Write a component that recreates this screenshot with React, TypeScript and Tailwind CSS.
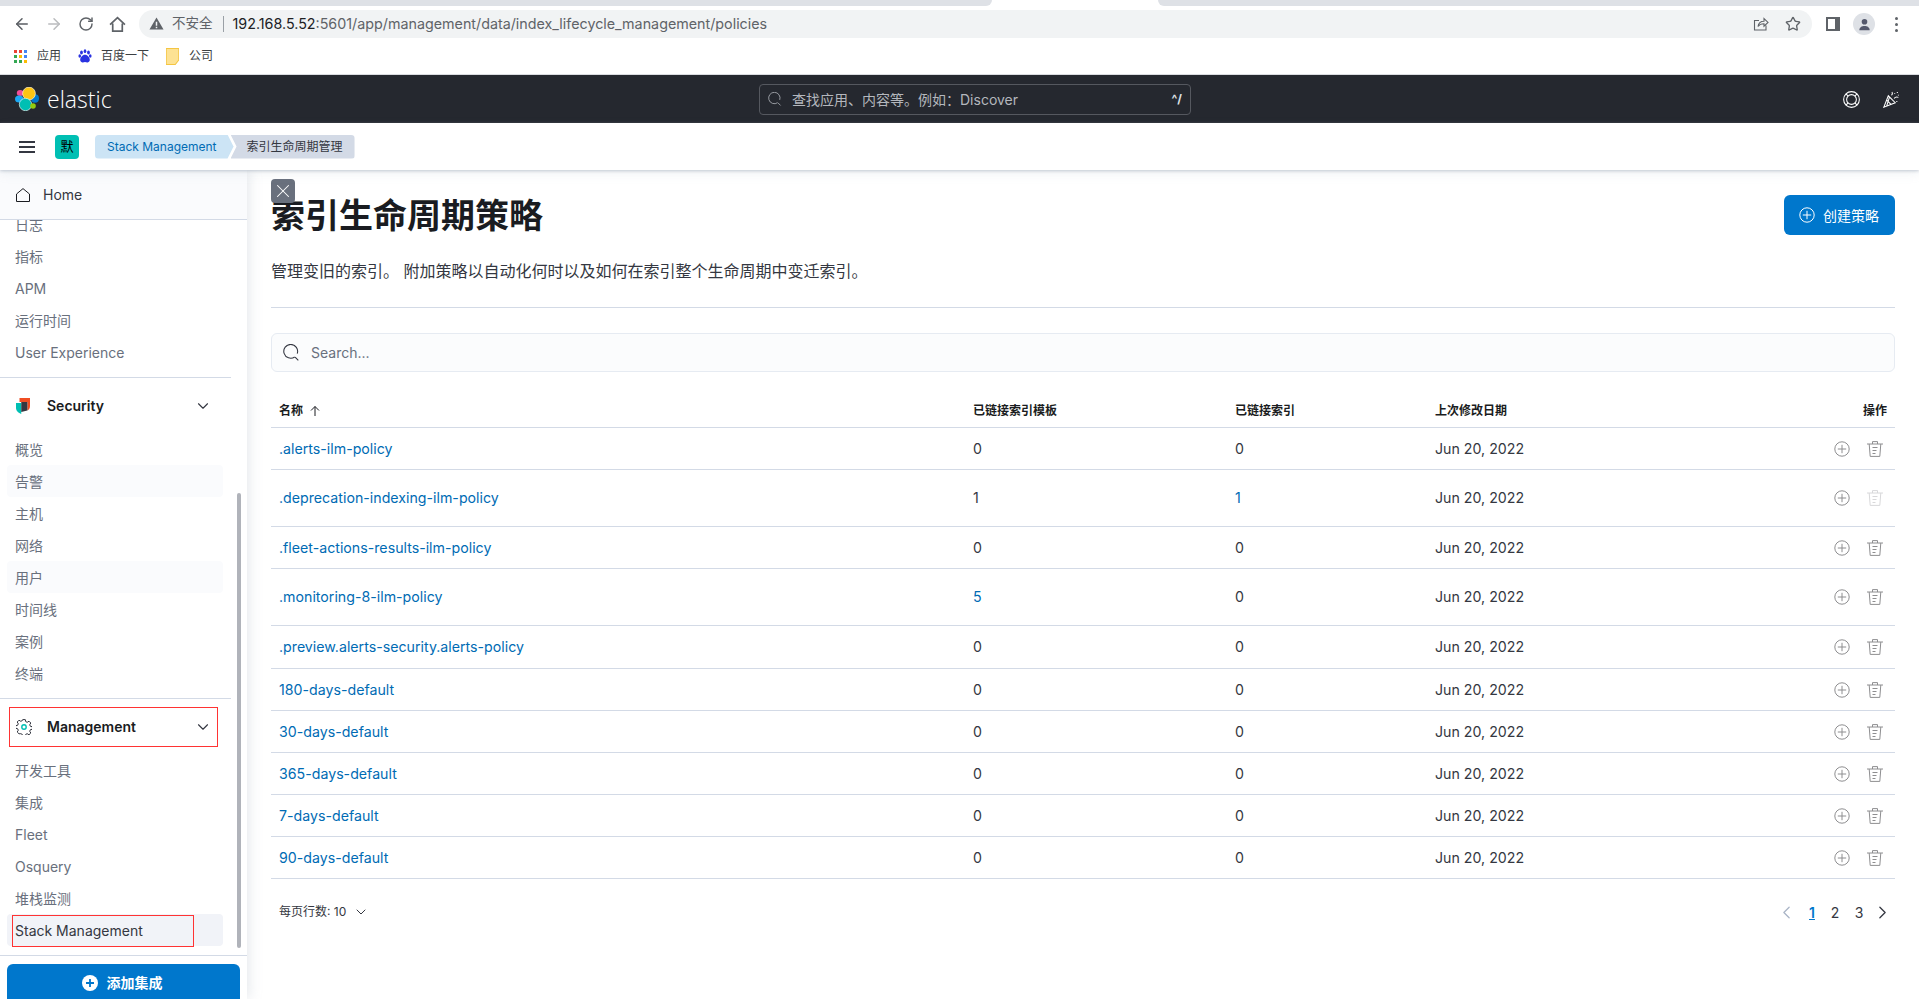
import { ArrowLeft, ArrowRight, ChevronDown, ChevronLeft, ChevronRight, RotateCw, Star, X } from "lucide-react";

const rows = [
  { name: ".alerts-ilm-policy", templates: "0", indices: "0", h: "h-[42px]" },
  { name: ".deprecation-indexing-ilm-policy", templates: "1", indices: "1", h: "h-[57px]", indicesLink: true, noDelete: true },
  { name: ".fleet-actions-results-ilm-policy", templates: "0", indices: "0", h: "h-[42px]" },
  { name: ".monitoring-8-ilm-policy", templates: "5", indices: "0", h: "h-[57px]", templatesLink: true },
  { name: ".preview.alerts-security.alerts-policy", templates: "0", indices: "0", h: "h-[43px]" },
  { name: "180-days-default", templates: "0", indices: "0", h: "h-[42px]" },
  { name: "30-days-default", templates: "0", indices: "0", h: "h-[42px]" },
  { name: "365-days-default", templates: "0", indices: "0", h: "h-[42px]" },
  { name: "7-days-default", templates: "0", indices: "0", h: "h-[42px]" },
  { name: "90-days-default", templates: "0", indices: "0", h: "h-[42px]" },
];

function PlusCircle({ className }: { className?: string }) {
  return (
    <svg viewBox="0 0 16 16" className={className} fill="none" stroke="currentColor" strokeWidth="1">
      <circle cx="8" cy="8" r="7.2" />
      <path d="M8 3.8v8.4M3.8 8h8.4" />
    </svg>
  );
}

function Trash({ className }: { className?: string }) {
  return (
    <svg viewBox="0 0 16 16" className={className} fill="none" stroke="currentColor" strokeWidth="1">
      <path d="M0 3h16M5.5 3V.6h5V3M2.2 3l1 12.4h9.6l1-12.4M5.5 6.500h5M5.500 9.500h4M5.500 12.500h3" />
    </svg>
  );
}

function Search({ className }: { className?: string }) {
  return (
    <svg viewBox="0 0 16 16" className={className} fill="none" stroke="currentColor" strokeWidth="1">
      <path d="M11 12.2A6.5 6.5 0 1 1 13.4 9M11.4 12.4l3 3" />
    </svg>
  );
}

function ElasticLogo() {
  return (
    <svg viewBox="0 0 24 24" className="h-6 w-6 shrink-0">
      <ellipse cx="5.2" cy="6" rx="3.4" ry="3" fill="#f04e98" />
      <ellipse cx="4.2" cy="12" rx="4.2" ry="3.6" fill="#1ba9f5" />
      <ellipse cx="20" cy="11.5" rx="4" ry="4.2" fill="#0077cc" />
      <circle cx="14" cy="6.5" r="6.4" fill="#fec514" stroke="#fff" strokeWidth="0.6" />
      <circle cx="10.5" cy="17.5" r="6.2" fill="#00bfb3" stroke="#fff" strokeWidth="0.6" />
      <circle cx="18" cy="19" r="2.8" fill="#93c90e" />
    </svg>
  );
}

function ChromeBar() {
  return (
    <div className="shrink-0 bg-white text-[#5f6368]">
      <div className="flex h-[6px]">
        <div className="w-[992px] rounded-br-md bg-[#dee1e6]" />
        <div className="w-[166px]" />
        <div className="flex-1 rounded-bl-md bg-[#dee1e6]" />
      </div>
      <div className="flex h-[32px] items-start pt-[4px]">
        <div className="flex w-[139px] shrink-0 items-center pl-[13px] pt-[5px]">
          <ArrowLeft size={18} strokeWidth={2} className="text-[#5a5e63]" />
          <ArrowRight size={18} strokeWidth={2} className="ml-[14px] text-[#babcbe]" />
          <RotateCw size={16} strokeWidth={2.2} className="ml-[15px]" />
          <svg viewBox="0 0 16 16" className="ml-[15px] h-[17px] w-[17px]" fill="none" stroke="currentColor" strokeWidth="1.6">
            <path d="M1 8.2 8 1.5l7 6.7M3.5 7v7.2h9V7" />
          </svg>
        </div>
        <div className="flex h-[28px] w-[1673px] items-center rounded-full bg-[#f1f3f4] pb-px pl-[10px] text-[14.3px]">
          <svg viewBox="0 0 16 16" className="h-[15px] w-[15px] fill-[#5f6368]">
            <path d="M8 1.5 15.5 14.5H.5ZM7.2 6v4.5h1.6V6Zm0 5.4V13h1.6v-1.6Z" fillRule="evenodd" />
          </svg>
          <span className="ml-[8px] text-[13.5px]">不安全</span>
          <span className="ml-[10px] mr-[9px] h-[16px] w-px bg-[#9aa0a6]" />
          <span className="text-[#202124]">192.168.5.52</span>
          <span>:5601/app/management/data/index_lifecycle_management/policies</span>
          <svg viewBox="0 0 16 16" className="ml-auto h-[16px] w-[16px]" fill="none" stroke="currentColor" strokeWidth="1.1">
            <path d="M13 9.5V14H1.5V4.5H6M5 10.5c.5-3.6 3-5.2 6-5.2V2.6L15 6.4l-4 3.8V7.8c-2.500 0-4.700.8-6 2.700Z" />
          </svg>
          <Star size={16} strokeWidth={2} className="ml-[16px] mr-[11px]" />
        </div>
        <div className="ml-[14px] h-[14px] w-[14px] self-center border-[2px] border-r-[5px] border-[#5f6368] bg-white" />
        <div className="ml-[13px] flex h-[22px] w-[22px] items-center justify-center self-center rounded-full bg-[#dee1e6]">
          <svg viewBox="0 0 16 16" className="h-[15px] w-[15px] fill-[#54586c]">
            <circle cx="8" cy="5" r="3" />
            <path d="M2.500 14c0-3 2.500-4.500 5.500-4.500s5.500 1.500 5.500 4.500Z" />
          </svg>
        </div>
        <div className="ml-[20px] flex flex-col gap-[3px] self-center">
          <span className="h-[3px] w-[3px] rounded-full bg-[#5f6368]" />
          <span className="h-[3px] w-[3px] rounded-full bg-[#5f6368]" />
          <span className="h-[3px] w-[3px] rounded-full bg-[#5f6368]" />
        </div>
      </div>
      <div className="flex h-[36px] items-center pl-[14px] text-[12px] text-[#3c4043]">
        <div className="grid h-[13px] w-[13px] grid-cols-3 gap-[2px]">
          <span className="bg-[#ea4335]" />
          <span className="bg-[#ea4335]" />
          <span className="bg-[#4285f4]" />
          <span className="bg-[#34a853]" />
          <span className="bg-[#fbbc04]" />
          <span className="bg-[#4285f4]" />
          <span className="bg-[#34a853]" />
          <span className="bg-[#34a853]" />
          <span className="bg-[#fbbc04]" />
        </div>
        <span className="ml-[10px]">应用</span>
        <svg viewBox="0 0 16 16" className="ml-[17px] h-[14px] w-[14px] fill-[#2932e1]">
          <ellipse cx="4" cy="4" rx="1.600" ry="2.200" />
          <ellipse cx="8" cy="2.500" rx="1.500" ry="2.200" />
          <ellipse cx="12" cy="4" rx="1.600" ry="2.200" />
          <ellipse cx="2" cy="8" rx="1.500" ry="2" />
          <ellipse cx="14" cy="8" rx="1.500" ry="2" />
          <path d="M8 6.500c-3 0-5.500 3-5.500 6 0 2 2 3 3 2.800 1-.2 1.500-.5 2.500-.5s1.500.3 2.500.5c1 .2 3-.8 3-2.800 0-3-2.500-6-5.500-6Z" />
        </svg>
        <span className="ml-[9px]">百度一下</span>
        <svg viewBox="0 0 16 16" className="ml-[17px] h-[17px] w-[13px]" preserveAspectRatio="none">
          <path d="M.5.5h15v11l-4 4H.5Z" fill="#fde293" stroke="#f4c542" />
        </svg>
        <span className="ml-[10px]">公司</span>
      </div>
      <div className="h-px bg-[#dadce0]" />
    </div>
  );
}

function TopNav() {
  return (
    <>
      <div className="flex h-[48px] shrink-0 items-center bg-[#25282f] pl-[15px] pr-[19px]">
        <div className="flex w-[744px] shrink-0 items-center">
          <ElasticLogo />
          <span className="ml-[8px] font-['Open_Sans',sans-serif] text-[23px] font-light leading-none text-white">elastic</span>
        </div>
        <div className="flex h-[31px] w-[432px] items-center rounded-[4px] border border-[#55585f] pl-[8px] pr-[8px] text-[14px] text-[#b4b7bd]">
          <Search className="h-[14px] w-[14px] text-[#a6a9af]" />
          <span className="ml-[10px]">查找应用、内容等。例如：Discover</span>
          <span className="ml-auto text-[12px] font-bold leading-none text-[#dfe1e5]">^/</span>
        </div>
        <svg viewBox="0 0 16 16" className="ml-auto h-[17px] w-[17px] text-white" fill="none" stroke="currentColor" strokeWidth="1">
          <circle cx="8" cy="8" r="7.400" />
          <circle cx="8" cy="8" r="4.600" />
          <path d="M2.800 2.800l2 2M13.200 2.800l-2 2M2.800 13.200l2-2M13.200 13.200l-2-2" />
        </svg>
        <svg viewBox="0 0 16 16" className="ml-[23px] h-[17px] w-[17px] text-white" fill="none" stroke="currentColor" strokeWidth="1">
          <path d="M.8 15.200 5 4.500l6.500 6.500ZM3.500 8.500l4 4M6 6l-2.500 8" />
          <path d="M8 4c1-.8 1-2 .5-3M10.500 7c1-1.500 2.800-1.500 4-1M11 2v.8M13.500 1v.8M14.500 3.500v.8M13 9.500v.8" />
        </svg>
      </div>
      <div className="z-20 flex h-[47px] shrink-0 items-center bg-white pl-[19px] shadow-[0_1px_3px_rgba(152,162,179,0.55),0_4px_10px_rgba(152,162,179,0.12)]">
        <div className="flex h-[12px] w-[16px] flex-col justify-between">
          <span className="h-[2px] bg-[#343741]" />
          <span className="h-[2px] bg-[#343741]" />
          <span className="h-[2px] bg-[#343741]" />
        </div>
        <div className="ml-[20px] flex h-[24px] w-[24px] items-center justify-center rounded-[4px] bg-[#00bfb3] text-[13px] text-black">默</div>
        <div className="ml-[16px] flex h-[24px] items-center">
          <div className="flex h-full items-center rounded-l-[4px] bg-[#cce4f5] pl-[12px] pr-[17px] text-[12px] leading-none text-[#006bb4] [clip-path:polygon(0_0,calc(100%-6px)_0,100%_50%,calc(100%-6px)_100%,0_100%)]">
            Stack Management
          </div>
          <div className="-ml-[3px] flex h-full items-center rounded-r-[4px] bg-[#d3dae6] pl-[16px] pr-[12px] text-[12px] text-[#343741] [clip-path:polygon(0_0,100%_0,100%_100%,0_100%,6px_50%)]">
            索引生命周期管理
          </div>
        </div>
      </div>
    </>
  );
}

function NavItem({ label, active, soft }: { label: string; active?: boolean; soft?: boolean }) {
  return (
    <div className={`ml-[7px] mr-[24px] flex h-[32px] items-center rounded-[4px] pl-[8px] text-[14px] ${active ? "bg-[#f1f3f8] text-[#343741]" : soft ? "bg-[#fafbfd] text-[#69707d]" : "text-[#69707d]"}`}>
      {label}
    </div>
  );
}

function NavGroupHeader({ label, icon }: { label: string; icon: React.ReactNode }) {
  return (
    <div className="flex h-[39px] items-center pl-[16px] pr-[35px]">
      <div className="flex w-[31px] shrink-0">{icon}</div>
      <span className="text-[14px] font-semibold text-[#1a1c21]">{label}</span>
      <ChevronDown size={18} strokeWidth={1.5} className="ml-auto text-[#343741]" />
    </div>
  );
}

function Sidebar() {
  return (
    <aside className="z-10 flex w-[247px] shrink-0 flex-col bg-white shadow-[2px_0_12px_rgba(152,162,179,0.25)]">
      <div className="flex h-[50px] shrink-0 items-center border-b border-[#d3dae6] bg-[#fafbfd] pl-[16px]">
        <svg viewBox="0 0 14 14" className="h-[14px] w-[14px] text-[#1a1c21]" fill="none" stroke="currentColor" strokeWidth="1">
          <path d="M.5 6 7 .6 13.500 6v7.500H.5Z" />
        </svg>
        <span className="ml-[13px] text-[14px] text-[#343741]">Home</span>
      </div>
      <div className="relative min-h-0 flex-1 overflow-hidden">
        <div className="-mt-[12px]">
          <NavItem label="日志" />
          <NavItem label="指标" />
          <NavItem label="APM" />
          <NavItem label="运行时间" />
          <NavItem label="User Experience" />
          <div className="mr-[16px] mt-[9px] h-px bg-[#d3dae6]" />
          <div className="mt-[8px]">
            <NavGroupHeader
              label="Security"
              icon={
                <svg viewBox="0 0 16 16" className="h-[16px] w-[14px]" preserveAspectRatio="none">
                  <path d="M4 0h12v8c0 2-1 3.500-3 4.500V4H4Z" fill="#f04e23" />
                  <path d="M0 5h6v11c-3-1-6-3-6-6Z" fill="#00bfb3" />
                  <path d="M6 4h7v8.500L6 14Z" fill="#343741" />
                </svg>
              }
            />
          </div>
          <div className="mt-[8px]">
            <NavItem label="概览" />
            <NavItem label="告警" soft />
            <NavItem label="主机" />
            <NavItem label="网络" />
            <NavItem label="用户" soft />
            <NavItem label="时间线" />
            <NavItem label="案例" />
            <NavItem label="终端" />
          </div>
          <div className="mr-[16px] mt-[9px] h-px bg-[#d3dae6]" />
          <div className="relative mt-[8px]">
            <NavGroupHeader
              label="Management"
              icon={
                <svg viewBox="0 0 16 16" className="h-[16px] w-[16px]" fill="none" stroke="#343741" strokeWidth="1">
                  <path d="M6.700.6h2.600l.4 2 1.500.7 1.800-1.100 1.800 1.800-1.100 1.800.7 1.500 2 .4v2.600l-2 .4-.7 1.500 1.100 1.800-1.800 1.800-1.800-1.100-1.500.7-.4 2H6.700l-.4-2-1.500-.7L3 14.800 1.200 13l1.100-1.800-.7-1.500-2-.4V6.700l2-.4.7-1.500L1.200 3 3 1.200l1.800 1.100 1.500-.7Z" />
                  <circle cx="8" cy="8" r="2.200" stroke="#00bfb3" strokeWidth="1.400" />
                </svg>
              }
            />
            <div className="absolute left-[9px] top-0 h-[40px] w-[209px] border border-[#f33]" />
          </div>
          <div className="mt-[8px]">
            <NavItem label="开发工具" />
            <NavItem label="集成" />
            <NavItem label="Fleet" />
            <NavItem label="Osquery" />
            <NavItem label="堆栈监测" />
            <div className="relative">
              <NavItem label="Stack Management" active />
              <div className="absolute left-[12px] top-px h-[32px] w-[182px] border border-[#f33]" />
            </div>
          </div>
        </div>
        <div className="absolute right-[6px] top-[273px] h-[455px] w-[4px] rounded-full bg-[#b0b3ba]" />
      </div>
      <div className="h-[44px] shrink-0 border-t border-[#d3dae6] px-[7px] pt-[8px]">
        <div className="flex h-[40px] items-center justify-center gap-[9px] rounded-[6px] bg-[#0077cc] pb-[3px] pr-[3px] text-[14px] font-semibold text-white">
          <svg viewBox="0 0 16 16" className="h-[16px] w-[16px]">
            <circle cx="8" cy="8" r="8" fill="#fff" />
            <path d="M8 4v8M4 8h8" stroke="#0077cc" strokeWidth="1.800" />
          </svg>
          添加集成
        </div>
      </div>
    </aside>
  );
}

function Table() {
  return (
    <div className="text-[14.2px] text-[#343741]">
      <div className="grid h-[37px] grid-cols-[694px_262px_200px_1fr_auto] items-center border-b border-[#d3dae6] pl-[8px] pr-[8px] pt-[4px] text-[12px] font-semibold text-[#1a1c21]">
        <div className="flex items-center gap-[6px]">
          名称
          <svg viewBox="0 0 12 12" className="h-[12px] w-[12px]" fill="none" stroke="currentColor" strokeWidth="1">
            <path d="M6 11V1.500M2 5.500l4-4 4 4" />
          </svg>
        </div>
        <div>已链接索引模板</div>
        <div>已链接索引</div>
        <div>上次修改日期</div>
        <div>操作</div>
      </div>
      {rows.map((row) => (
        <div
          key={row.name}
          className={`grid ${row.h} grid-cols-[694px_262px_200px_1fr_auto] items-center border-b border-[#d3dae6] pl-[8px] pr-[12px]`}
        >
          <div className="text-[#006bb4]">{row.name}</div>
          <div className={row.templatesLink ? "text-[#006bb4]" : ""}>{row.templates}</div>
          <div className={row.indicesLink ? "text-[#006bb4]" : ""}>{row.indices}</div>
          <div>Jun 20, 2022</div>
          <div className="flex items-center gap-[17px]">
            <PlusCircle className="h-[16px] w-[16px] text-[#8e8e90]" />
            <Trash className={`h-[16px] w-[16px] ${row.noDelete ? "text-[#d8d8da]" : "text-[#8e8e90]"}`} />
          </div>
        </div>
      ))}
      <div className="mt-[24px] flex h-[18px] items-center pl-[8px] pr-[2px] text-[12px]">
        <span>每页行数: 10</span>
        <ChevronDown size={16} strokeWidth={1.5} className="ml-[7px]" />
        <ChevronLeft size={21} strokeWidth={1.5} className="ml-auto text-[#a9b4c6]" />
        <span className="ml-[8px] w-[14px] text-center text-[14px] font-semibold text-[#0077cc] underline">1</span>
        <span className="ml-[9px] w-[14px] text-center text-[14px]">2</span>
        <span className="ml-[10px] w-[14px] text-center text-[14px]">3</span>
        <ChevronRight size={21} strokeWidth={1.5} className="ml-[6px]" />
      </div>
    </div>
  );
}

export default function App() {
  return (
    <div className="flex h-[999px] flex-col overflow-hidden bg-white font-['Inter','Noto_Sans_CJK_SC',sans-serif]">
      <ChromeBar />
      <TopNav />
      <div className="flex min-h-0 flex-1">
        <Sidebar />
        <main className="relative flex-1 pl-[24px] pr-[24px] pt-[25px]">
          <div className="absolute left-[24px] top-[9px] z-10 flex h-[24px] w-[24px] items-center justify-center rounded-[4px] bg-[#69707d] text-white">
            <X size={22} strokeWidth={1.1} />
          </div>
          <div className="flex items-start justify-between">
            <h1 className="mt-px text-[34px] font-bold leading-[40px] text-[#1a1c21]">索引生命周期策略</h1>
            <div className="flex h-[40px] w-[111px] items-center justify-center gap-[8px] rounded-[6px] bg-[#0077cc] pr-px text-[14px] text-white">
              <PlusCircle className="h-[16px] w-[16px]" />
              创建策略
            </div>
          </div>
          <p className="mt-[23px] text-[16px] leading-[24px] text-[#343741]">管理变旧的索引。 附加策略以自动化何时以及如何在索引整个生命周期中变迁索引。</p>
          <div className="mt-[24px] h-px bg-[#d3dae6]" />
          <div className="mt-[25px] flex h-[39px] items-center rounded-[6px] border border-[#e6ebf2] bg-[#fbfcfd] pb-px pl-[11px] text-[14px] text-[#69707d]">
            <Search className="h-[17px] w-[17px] text-[#343741]" />
            <span className="ml-[11px]">Search...</span>
          </div>
          <div className="mt-[19px]">
            <Table />
          </div>
        </main>
      </div>
    </div>
  );
}
